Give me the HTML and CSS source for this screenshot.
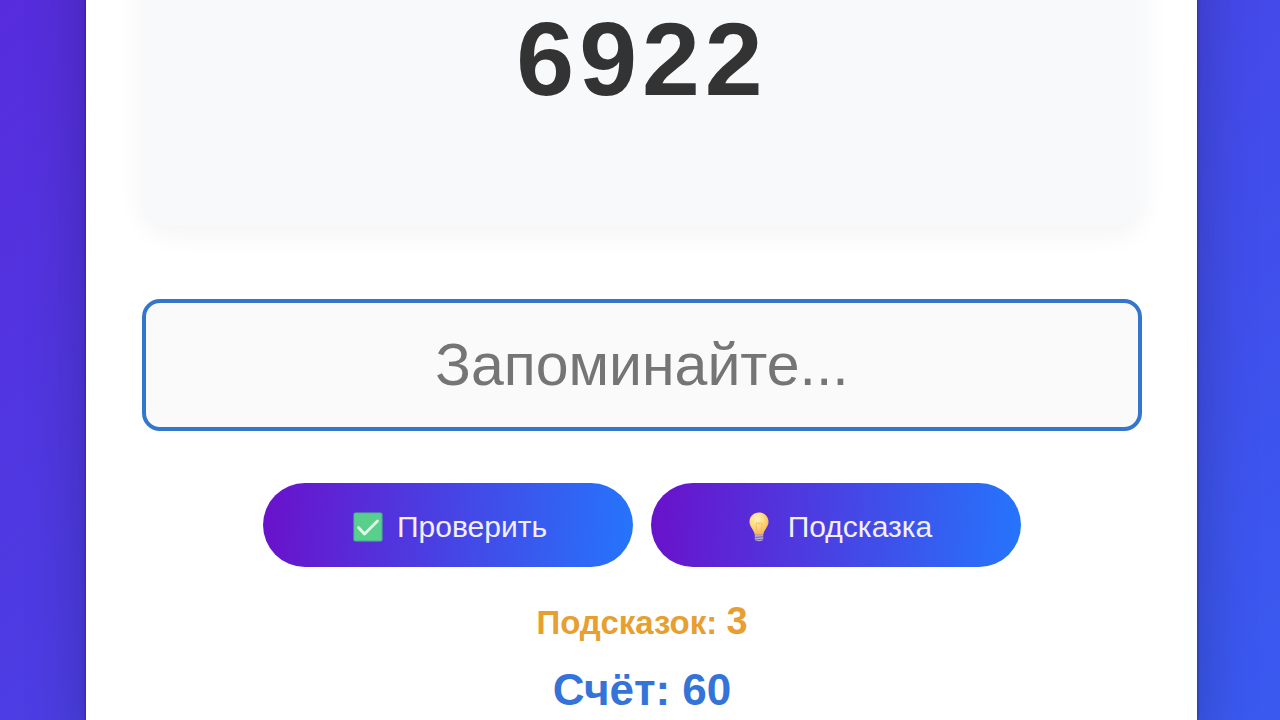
FILE: index.html
```html
<!DOCTYPE html>
<html lang="ru">
<head>
<meta charset="utf-8">
<meta name="viewport" content="width=device-width, initial-scale=1">
<title>Запоминание чисел</title>
<link rel="stylesheet" href="styles.css">
</head>
<body>
<main class="game">
  <section class="display">
    <output class="number">6922</output>
  </section>
  <form class="form">
    <input class="answer" type="text" aria-label="Ответ" placeholder="Запоминайте...">
    <div class="actions">
      <button class="btn" type="button">
        <svg class="icon" viewBox="0 0 30 30" aria-hidden="true">
          <rect x="0.5" y="0.5" width="29" height="29" rx="2" fill="#4fbd8b"/>
          <rect x="1.5" y="1.5" width="26.5" height="26.5" rx="1.5" fill="#58d08c"/>
          <path d="M5.500 15.500l6 6.500L24.500 9" fill="none" stroke="#e0fbe9" stroke-width="2.800" stroke-linecap="round" stroke-linejoin="round"/>
        </svg>
        <span>Проверить</span>
      </button>
      <button class="btn" type="button">
        <svg class="icon" viewBox="0 0 30 30" aria-hidden="true">
          <defs>
            <radialGradient id="glow" cx="0.4" cy="0.3" r="0.7">
              <stop offset="0" stop-color="#fff3c4"/>
              <stop offset="0.5" stop-color="#ffdb7d"/>
              <stop offset="1" stop-color="#f5b45a"/>
            </radialGradient>
          </defs>
          <path d="M15 .5c-5.500 0-9.500 4-9.500 9.200 0 5.500 4.500 7.500 5.200 13h8.600c.7-5.500 5.200-7.500 5.200-13 0-5.200-4-9.200-9.500-9.200z" fill="url(#glow)"/>
          <path d="M13.500 22l-1.500-9c0-3 2.500-3 3-.8.5-2.200 3-2.200 3 .8l-1.500 9" fill="none" stroke="#f5bb57" stroke-width="1"/>
          <path d="M10.800 22.700h8.400v4.500c0 1.200-2 2-4.200 2s-4.200-.8-4.200-2z" fill="#b9a9d2"/>
          <path d="M10.800 25.500l8.400-.8M11 28l8-.8" stroke="#7568b4" stroke-width="1"/>
        </svg>
        <span>Подсказка</span>
      </button>
    </div>
  </form>
  <p class="hints">Подсказок: <span class="hints-count">3</span></p>
  <p class="score">Счёт: 60</p>
</main>
</body>
</html>
```
FILE: styles.css
```css
* {
  box-sizing: border-box;
}

body {
  display: flow-root;
  margin: 0;
  min-height: 100vh;
  padding: 0 83px 0 86px;
  overflow: hidden;
  font-family: "Liberation Sans", Arial, sans-serif;
  background: linear-gradient(135deg, #572cdc, #395af0);
}

.game {
  min-height: calc(100vh + 80px);
  margin-top: -80px;
  padding: 0 55px 0 56px;
  text-align: center;
  background: #fff;
  box-shadow: 0 28px 56px rgba(0, 0, 0, 0.23), 0 0 3px rgba(0, 0, 0, 0.4);
}

.display {
  padding: 80px 0 108px;
  border-radius: 28px;
  background: #f8f9fb;
  box-shadow: 0 8px 28px rgba(0, 0, 0, 0.05);
}

.number {
  display: block;
  font-size: 104px;
  font-weight: 700;
  line-height: 118px;
  letter-spacing: 5px;
  color: #333;
}

.form {
  margin-top: 73px;
}

.answer {
  display: block;
  width: 100%;
  padding: 28px;
  border: 4px solid #3476cc;
  border-radius: 18px;
  outline: none;
  background: #fafafa;
  font: 59px/68px "Liberation Sans", Arial, sans-serif;
  text-align: center;
  color: #333;
}

.answer::placeholder {
  color: #757575;
  opacity: 1;
}

.actions {
  display: flex;
  justify-content: center;
  gap: 18px;
  margin-top: 52px;
}

.btn {
  display: flex;
  align-items: center;
  justify-content: center;
  gap: 14px;
  width: 370px;
  padding: 26px 22px 22px 26px;
  border: 0;
  border-radius: 42px;
  background: linear-gradient(94deg, #6a11cb, #2575fc);
  font: 30px/36px "Liberation Sans", Arial, sans-serif;
  color: #f4eeff;
}

.icon {
  flex: none;
  width: 30px;
  height: 30px;
}

.hints {
  margin: 32px 0 0;
  font-size: 33px;
  font-weight: 700;
  line-height: 44px;
  color: #e69f30;
}

.hints-count {
  font-size: 38px;
}

.score {
  margin: 20px 0 0;
  font-size: 44px;
  font-weight: 700;
  line-height: 50px;
  color: #3474d8;
}
```
